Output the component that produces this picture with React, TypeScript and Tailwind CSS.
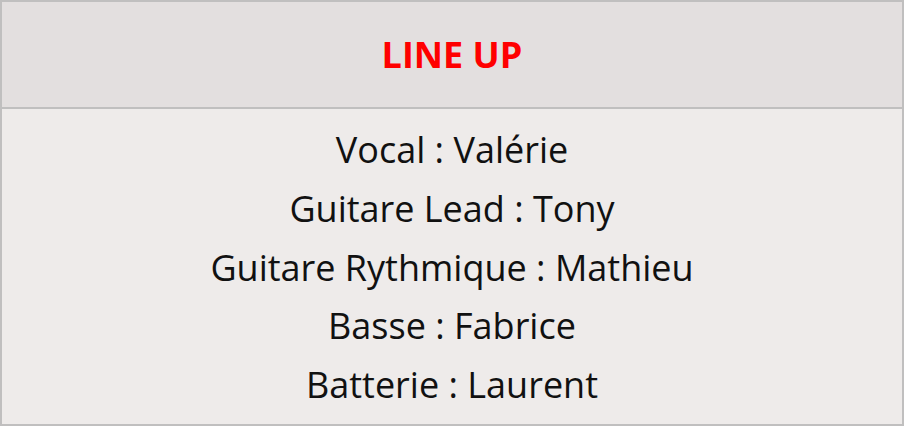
const lineUp = [
  "Vocal : Valérie",
  "Guitare Lead : Tony",
  "Guitare Rythmique : Mathieu",
  "Basse : Fabrice",
  "Batterie : Laurent",
];

export default function App() {
  return (
    <div className="w-[904px] h-[426px] font-['Open_Sans',sans-serif]">
      <div className="flex h-full flex-col border-2 border-[#c0bfbf]">
        <div className="flex h-[107px] items-center justify-center border-b-2 border-[#c0bfbf] bg-[#e3dfdf]">
          <h1 className="text-[36px] font-bold text-[#ff0000]">LINE UP</h1>
        </div>
        <div className="flex flex-1 flex-col items-center justify-center bg-[#eeebea] pt-[3px] text-[#111]">
          {lineUp.map((line) => (
            <p key={line} className="text-[36px] leading-[58.75px]">
              {line}
            </p>
          ))}
        </div>
      </div>
    </div>
  );
}
